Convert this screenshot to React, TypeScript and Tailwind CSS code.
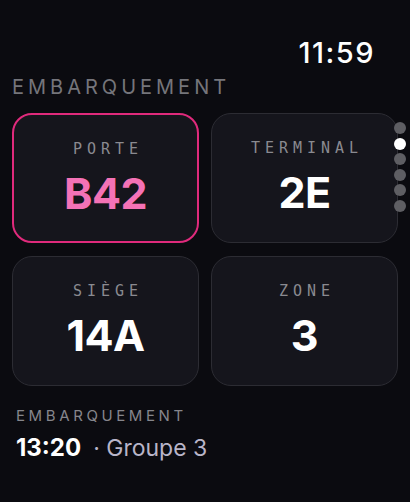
const tiles = [
  { label: 'PORTE', value: 'B42', active: true },
  { label: 'TERMINAL', value: '2E' },
  { label: 'SIÈGE', value: '14A' },
  { label: 'ZONE', value: '3' },
]

function Tile({ label, value, active }: { label: string; value: string; active?: boolean }) {
  return (
    <div
      className={
        'h-[130px] rounded-[20px] bg-[#15151c] flex flex-col items-center pt-[25px] ' +
        (active ? 'border-2 border-[#e02a7c]' : 'border border-[#2c2c33]')
      }
    >
      <div className="font-['DejaVu_Sans_Mono',monospace] text-[15px] leading-[18px] tracking-[5px] pl-[5px] text-[#8a8a90]">
        {label}
      </div>
      <div
        className={
          "font-['Inter',sans-serif] font-bold text-[43px] leading-[50px] mt-[10px] tracking-[-0.5px] " +
          (active ? 'text-[#f472b6]' : 'text-white')
        }
      >
        {value}
      </div>
    </div>
  )
}

export default function App() {
  return (
    <div className="relative w-[410px] h-[502px] bg-[#0b0b10] font-['Inter',sans-serif] overflow-hidden">
      <div className="flex justify-end pr-[35px] pt-[36px]">
        <span className="text-white text-[29px] leading-[34px] font-medium tracking-[1.5px]">11:59</span>
      </div>

      <div className="px-[12px] mt-[4px] text-[20px] leading-[26px] tracking-[4px] text-[#75757b]">
        EMBARQUEMENT
      </div>

      <div className="grid grid-cols-2 gap-x-[12px] gap-y-[13px] pl-[12px] pr-[12px] mt-[13px] w-[410px]">
        {tiles.map(t => (
          <Tile key={t.label} {...t} />
        ))}
      </div>

      {/* page dots */}
      <div className="absolute left-[394px] top-[122px] flex flex-col gap-[3.6px]">
        {[0, 1, 2, 3, 4, 5].map(i => (
          <div key={i} className={'w-[12px] h-[12px] rounded-full ' + (i === 1 ? 'bg-white' : 'bg-[#5e5e63]')} />
        ))}
      </div>

      <div className="px-[16px] mt-[21px]">
        <div className="text-[15px] leading-[18px] tracking-[3.6px] text-[#86868c]">EMBARQUEMENT</div>
        <div className="flex items-baseline mt-[9px]">
          <span className="text-white font-bold text-[24px] leading-[28px]">13:20</span>
          <span className="text-[#b9b5c9] text-[23px] leading-[28px] ml-[12px]">· Groupe 3</span>
        </div>
      </div>
    </div>
  )
}
